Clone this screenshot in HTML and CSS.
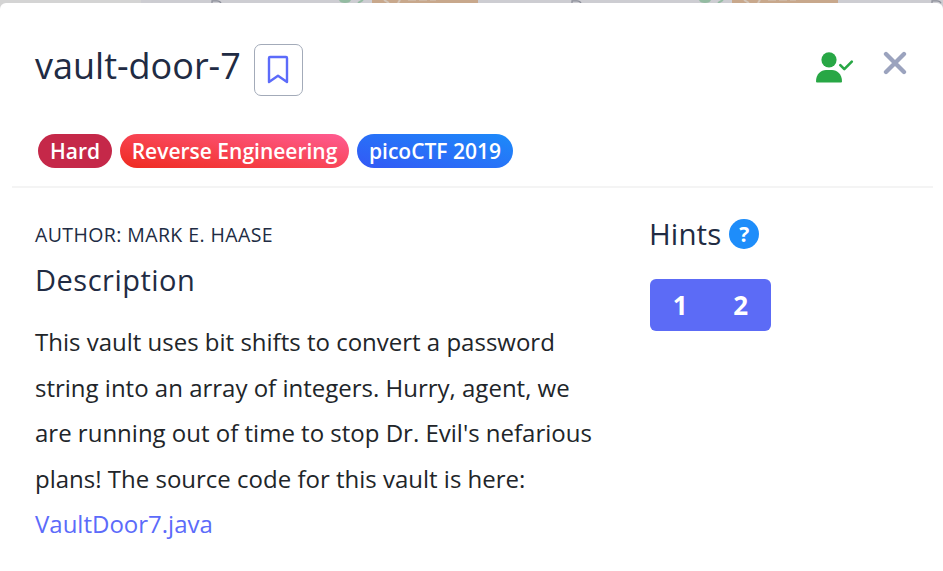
FILE: index.html
```html
<!DOCTYPE html>
<html lang="en">
<head>
<meta charset="utf-8">
<title>vault-door-7</title>
<link rel="stylesheet" href="styles.css">
</head>
<body>
<svg class="backdrop" viewBox="0 0 943 12" aria-hidden="true">
  <defs>
    <g id="peek">
      <path d="M212 4V.8h5q3 0 4 2.500" fill="none" stroke="#8a8d98" stroke-width="1.2"/>
      <path d="M339 0h12q-1 3-6 3t-6-3z" fill="#94bba2"/>
      <path d="M358 3l5-3" stroke="#94bba2" stroke-width="2"/>
      <path d="M372 0h106v4H372z" fill="#c8a88c"/>
      <path d="M384 0l5 3M400 0l-2 3" stroke="#d3c6ba" stroke-width="2"/>
      <path d="M408 0h28" stroke="#d3c6ba" stroke-width="1" stroke-dasharray="8 3"/>
    </g>
  </defs>
  <path d="M0 0h141v12H0z" fill="#d4d4d4"/>
  <path d="M141 0h802v12H141z" fill="#cdcdd2"/>
  <use href="#peek"/><use href="#peek" x="360"/><use href="#peek" x="720"/>
</svg>
<main class="modal">
  <header class="header">
    <div class="title-row">
      <h1 class="title">vault-door-7</h1>
      <button class="bookmark" aria-label="Bookmark"><svg viewBox="0 0 24 30"><path d="M3 2.900Q3 2 4 2h16q1 0 1 .9V27l-9-6.300L3 27z"/></svg></button>
      <svg class="solved" viewBox="0 0 40 34"><circle cx="14" cy="9.800" r="7.600"/><path d="M1 31.500C1 24 6 20 11 20h6c5 0 10 4 10 11.500q0 1-1 1H2q-1 0-1-1z"/><path class="tick" d="M25.300 15.200l4 4 7.500-7.500"/></svg>
      <svg class="close" viewBox="0 0 24 24"><path d="M3 3l18 18M21 3L3 21"/></svg>
    </div>
    <div class="tags">
      <span class="tag hard">Hard</span>
      <span class="tag category">Reverse Engineering</span>
      <span class="tag event">picoCTF 2019</span>
    </div>
  </header>
  <div class="content">
    <section class="details">
      <p class="author">AUTHOR: MARK E. HAASE</p>
      <h2 class="heading">Description</h2>
      <p class="text">This vault uses bit shifts to convert a password<br>string into an array of integers. Hurry, agent, we<br>are running out of time to stop Dr. Evil's nefarious<br>plans! The source code for this vault is here:<br><a class="link">VaultDoor7.java</a></p>
    </section>
    <aside class="hints">
      <h2 class="hints-title">Hints <span class="help">?</span></h2>
      <div class="hint-buttons"><span>1</span><span>2</span></div>
    </aside>
  </div>
</main>
</body>
</html>
```
FILE: styles.css
```css
* { box-sizing: border-box; }
body { margin: 0; height: 571px; overflow: hidden; font-family: "Open Sans", sans-serif; color: #212b43; background: #fff; }
h1, h2, p { margin: 0; font-weight: 400; }
.backdrop { position: absolute; top: 0; left: 0; width: 943px; height: 12px; }
.modal { position: relative; margin-top: 3px; height: 568px; background: #fff; border-radius: 6px 6px 0 0; }
.header { height: 185px; margin: 0 10px 0 12px; border-bottom: 2px solid #f4f4f4; }
.title-row { display: flex; align-items: flex-start; padding: 41px 0 0 23px; height: 131px; }
.title { width: 219px; font-size: 36px; line-height: 44px; white-space: nowrap; }
.bookmark { width: 49px; height: 52px; padding: 10px 1px 0 0; border: 1px solid #a3abb9; border-radius: 7px; background: #fff; display: flex; justify-content: center; }
.bookmark svg { width: 24px; height: 30px; fill: none; stroke: #5c6bfa; stroke-width: 2.4; stroke-linejoin: round; }
.solved { width: 40px; height: 34px; margin: 6px 0 0 512px; fill: #28a745; }
.tick { fill: none; stroke: #28a745; stroke-width: 2.6; stroke-linecap: round; stroke-linejoin: round; }
.close { width: 24px; height: 24px; margin: 6.5px 0 0 28.300px; fill: none; stroke: #9ba3be; stroke-width: 4.3; stroke-linecap: round; }
.tags { display: flex; gap: 8px; padding-left: 26px; }
.tag { height: 34px; border-radius: 17px; font-size: 21px; font-weight: 600; line-height: 34px; text-align: center; color: #fff; white-space: nowrap; }
.hard { width: 74px; background: #c52849; }
.category { width: 229px; background: linear-gradient(10deg, #ee2a1f, #f7424f 45%, #ff5c93); }
.event { width: 156px; background: linear-gradient(15deg, #3358f5, #1c8bfa); }
.content { display: flex; padding: 30px 0 0 35px; }
.details { width: 614px; }
.author { font-size: 19.5px; line-height: 34px; letter-spacing: 0.4px; white-space: nowrap; }
.heading { font-size: 29px; line-height: 40px; letter-spacing: 0.5px; margin-top: 8px; }
.text { margin-top: 19px; font-size: 24px; line-height: 45.5px; color: #212529; white-space: nowrap; }
.link { color: #5c6bfa; }
.hints-title { display: flex; gap: 8px; align-items: center; width: 110px; height: 30px; margin-top: 1px; font-size: 29.5px; line-height: 30px; letter-spacing: 0.1px; }
.help { width: 30px; height: 30px; margin-left: auto; letter-spacing: 0; border-radius: 50%; background: #1e8dfa; color: #fff; font-size: 21px; font-weight: 700; text-align: center; }
.hint-buttons { display: flex; width: 121px; height: 52px; margin: 29.5px 0 0 1px; border-radius: 6px; background: #5c6bf6; color: #fff; font-size: 26px; font-weight: 700; line-height: 53px; text-align: center; }
.hint-buttons span { flex: 1; }
```
